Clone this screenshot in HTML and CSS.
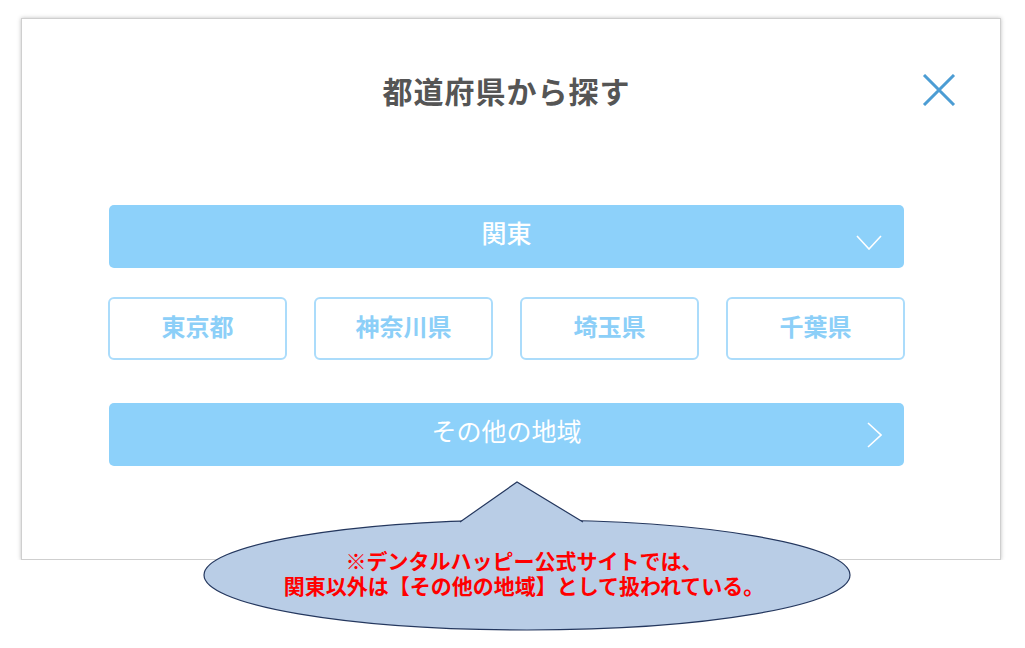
FILE: index.html
```html
<!DOCTYPE html>
<html lang="ja">
<head>
    <meta charset="UTF-8">
    <meta name="viewport" content="width=device-width, initial-scale=1.0">
    <title>都道府県から探す</title>
    <link rel="stylesheet" href="styles.css">
</head>
<body>
    <div class="modal">
        <div class="modal-header">
            <h2 class="modal-title">都道府県から探す</h2>
            <button class="close-btn" aria-label="閉じる">
                <svg width="34" height="32" viewBox="0 0 34 32">
                    <path d="M2 1 L32 31 M32 1 L2 31" stroke="#4c9dd4" stroke-width="3" fill="none"/>
                </svg>
            </button>
        </div>

        <!-- 関東 -->
        <div class="area-bar">
            <span>関東</span>
            <svg class="chev-down" width="26" height="15" viewBox="0 0 26 15">
                <path d="M1 1 L13 14 L25 1" stroke="#fff" stroke-width="1.6" fill="none"/>
            </svg>
        </div>

        <div class="pref-list">
            <a class="pref-btn">東京都</a>
            <a class="pref-btn">神奈川県</a>
            <a class="pref-btn">埼玉県</a>
            <a class="pref-btn">千葉県</a>
        </div>

        <!-- その他 -->
        <div class="area-bar other">
            <span>その他の地域</span>
            <svg class="chev-right" width="15" height="26" viewBox="0 0 15 26">
                <path d="M1 1 L14 13 L1 25" stroke="#fff" stroke-width="1.6" fill="none"/>
            </svg>
        </div>
    </div>

    <!-- annotation callout -->
    <div class="callout">
        <svg width="1025" height="648" viewBox="0 0 1025 648">
            <ellipse cx="527" cy="575" rx="323" ry="55" fill="#b9cde6" stroke="#24375e" stroke-width="1.2"/>
            <polyline points="460,522 517,482 583,522" fill="#b9cde6" stroke="#24375e" stroke-width="1.2"/>
            <polygon points="462,523 517,486 581,523 581,527 462,527" fill="#b9cde6"/>
        </svg>
        <p class="callout-text">※デンタルハッピー公式サイトでは、<br>関東以外は【その他の地域】として扱われている。</p>
    </div>
</body>
</html>
```

FILE: styles.css
```css
body { margin: 0; background: #fff; font-family: "Noto Sans CJK JP", "Noto Sans", sans-serif; }
.modal {
    box-sizing: border-box;
    width: 980px;
    height: 542px;
    margin: 18px 0 0 21px;
    padding: 0 96px 0 87px;
    border: 1px solid #cfcfcf;
    box-shadow: 0 0 4px rgba(0,0,0,0.25);
    background: #fff;
}
.modal-header { position: relative; padding-top: 52px; margin-bottom: 96px; }
.modal-title { margin: 0; text-align: center; font-size: 30px; line-height: 38px; font-weight: bold; color: #555; letter-spacing: 1px; }
.close-btn { position: absolute; top: 55px; right: -52px; border: none; background: none; padding: 0; cursor: pointer; line-height: 0; }
.area-bar {
    position: relative;
    height: 63px;
    border-radius: 5px;
    background: #8dd1fa;
    color: #fff;
    font-size: 25px;
    font-weight: 500;
    display: flex;
    align-items: center;
    justify-content: center;
}
.area-bar span { margin-top: -10px; }
.area-bar.other { font-weight: 400; }
.chev-down { position: absolute; right: 22px; top: 30px; }
.chev-right { position: absolute; right: 22px; top: 19px; }
.pref-list { display: grid; grid-template-columns: repeat(4, 1fr); gap: 27px; margin: 29px -1px 43px -1px; }
.pref-btn {
    box-sizing: border-box;
    height: 63px;
    padding-bottom: 6px;
    border: 2px solid #abdcfb;
    border-radius: 6px;
    display: flex;
    align-items: center;
    justify-content: center;
    color: #8ccff8;
    font-size: 24px;
    font-weight: bold;
    cursor: pointer;
}
.callout { position: absolute; left: 0; top: 0; width: 1025px; height: 648px; pointer-events: none; }
.callout svg { display: block; }
.callout-text {
    position: absolute;
    left: 224px;
    width: 600px;
    top: 548px;
    margin: 0;
    text-align: center;
    color: #ff0000;
    font-size: 21px;
    line-height: 25px;
    font-weight: bold;
}
```
